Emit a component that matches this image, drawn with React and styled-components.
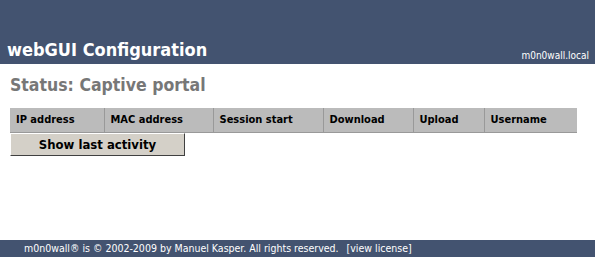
import React from "react";
import styled, { createGlobalStyle } from "styled-components";

const GlobalStyle = createGlobalStyle`
  html, body {
    margin: 0;
    padding: 0;
    background: #ffffff;
  }
  body {
    font-family: "DejaVu Sans Condensed", "DejaVu Sans", sans-serif;
  }
`;

const columns = [
  { label: "IP address", width: 94 },
  { label: "MAC address", width: 109 },
  { label: "Session start", width: 110 },
  { label: "Download", width: 90 },
  { label: "Upload", width: 71 },
  { label: "Username", width: 93 },
];

const App = () => {
  return (
    <Page>
      <GlobalStyle />
      <Header>
        <Title>webGUI Configuration</Title>
        <Host>m0n0wall.local</Host>
      </Header>
      <Main>
        <PageTitle>Status: Captive portal</PageTitle>
        <Table>
          <thead>
            <tr>
              {columns.map((c) => (
                <HeadCell key={c.label} $width={c.width}>
                  {c.label}
                </HeadCell>
              ))}
            </tr>
          </thead>
        </Table>
        <Button type="button">Show last activity</Button>
      </Main>
      <Footer>
        m0n0wall® is © 2002-2009 by Manuel Kasper. All rights reserved.
        <License>[view license]</License>
      </Footer>
    </Page>
  );
};

const Page = styled.div`
  min-height: 100vh;
  display: flex;
  flex-direction: column;
`;

const Header = styled.div`
  height: 64px;
  background-color: #435370;
  display: flex;
  align-items: flex-end;
  justify-content: space-between;
  padding: 0 6px 0 7px;
  box-sizing: border-box;
`;

const Title = styled.h1`
  margin: 0 0 3px 0;
  color: #ffffff;
  font-size: 18px;
  font-weight: bold;
  line-height: 22px;
`;

const Host = styled.span`
  color: #ffffff;
  font-size: 10px;
  line-height: 14px;
  margin-bottom: 1px;
`;

const Main = styled.div`
  flex: 1;
  padding: 9px 10px 0 10px;
`;

const PageTitle = styled.h2`
  margin: 0 0 11px 0;
  color: #777777;
  font-size: 17.5px;
  font-weight: bold;
  line-height: 24px;
`;

const Table = styled.table`
  border-collapse: collapse;
  width: 567px;
`;

const HeadCell = styled.th`
  width: ${(p) => p.$width}px;
  box-sizing: border-box;
  height: 24px;
  padding: 0 6px;
  background-color: #bbbbbb;
  border-right: 1px solid #999999;
  border-bottom: 1px solid #999999;
  text-align: left;
  font-size: 11px;
  font-weight: bold;
  color: #000000;
  &:last-child {
    border-right: none;
  }
`;

const Button = styled.button`
  display: block;
  width: 175px;
  height: 23px;
  margin: 0;
  padding: 0;
  background-color: #d4d0c8;
  border: 1px solid;
  border-color: #ffffff #404040 #404040 #ffffff;
  font-family: inherit;
  font-size: 13px;
  font-weight: bold;
  color: #000000;
`;

const Footer = styled.div`
  height: 17px;
  background-color: #435370;
  color: #ffffff;
  font-size: 10.5px;
  line-height: 17px;
  padding-left: 24px;
`;

const License = styled.span`
  margin-left: 8px;
`;

export default App;
